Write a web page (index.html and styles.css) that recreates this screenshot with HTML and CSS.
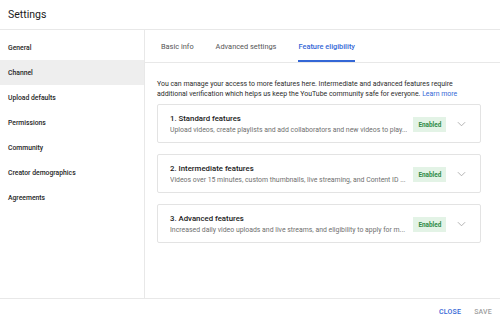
FILE: index.html
```html
<!DOCTYPE html>
<html>
<head>
<meta charset="utf-8">
<link rel="stylesheet" href="styles.css">
</head>
<body>
<div class="dialog">
  <header class="header"><h1 class="title">Settings</h1></header>
  <div class="main">
    <nav class="sidebar">
      <div class="nav-item">General</div>
      <div class="nav-item active">Channel</div>
      <div class="nav-item">Upload defaults</div>
      <div class="nav-item">Permissions</div>
      <div class="nav-item">Community</div>
      <div class="nav-item">Creator demographics</div>
      <div class="nav-item">Agreements</div>
    </nav>
    <section class="content">
      <div class="tabs">
        <div class="tab">Basic info</div>
        <div class="tab">Advanced settings</div>
        <div class="tab selected">Feature eligibility</div>
      </div>
      <div class="body">
        <p class="desc">You can manage your access to more features here. Intermediate and advanced features require additional verification which helps us keep the YouTube community safe for everyone. <span class="link">Learn more</span></p>
        <div class="cards">
          <div class="card">
            <div class="card-text">
              <div class="card-title">1. Standard features</div>
              <div class="card-sub">Upload videos, create playlists and add collaborators and new videos to play...</div>
            </div>
            <span class="badge">Enabled</span>
            <svg class="chev" viewBox="0 0 10 6" width="9" height="6"><path d="M1 1l4 4 4-4" fill="none" stroke="#a0a0a0" stroke-width="0.9"/></svg>
          </div>
          <div class="card">
            <div class="card-text">
              <div class="card-title">2. Intermediate features</div>
              <div class="card-sub">Videos over 15 minutes, custom thumbnails, live streaming, and Content ID ...</div>
            </div>
            <span class="badge">Enabled</span>
            <svg class="chev" viewBox="0 0 10 6" width="9" height="6"><path d="M1 1l4 4 4-4" fill="none" stroke="#a0a0a0" stroke-width="0.9"/></svg>
          </div>
          <div class="card">
            <div class="card-text">
              <div class="card-title">3. Advanced features</div>
              <div class="card-sub">Increased daily video uploads and live streams, and eligibility to apply for m...</div>
            </div>
            <span class="badge">Enabled</span>
            <svg class="chev" viewBox="0 0 10 6" width="9" height="6"><path d="M1 1l4 4 4-4" fill="none" stroke="#a0a0a0" stroke-width="0.9"/></svg>
          </div>
        </div>
      </div>
    </section>
  </div>
  <footer class="footer">
    <span class="btn primary">CLOSE</span>
    <span class="btn disabled">SAVE</span>
  </footer>
</div>
</body>
</html>
```

FILE: styles.css
```css
* { box-sizing: border-box; }
html, body { margin: 0; padding: 0; background: #fff; }
body { font-family: Roboto, "Liberation Sans", sans-serif; color: #0d0d0d; }
.dialog { width: 500px; height: 320px; display: flex; flex-direction: column; overflow: hidden; }
.header { height: 30px; border-bottom: 1px solid #e8e8e8; display: flex; align-items: center; padding-left: 8px; }
.title { margin: 0; font-size: 10.5px; font-weight: 400; color: #1a1a1a; }
.main { display: flex; height: 268px; }
.sidebar { width: 145px; border-right: 1px solid #e8e8e8; padding-top: 5px; flex: none; }
.nav-item { height: 25px; display: flex; align-items: center; padding-left: 8px; font-size: 6.8px; font-weight: 500; color: #262626; }
.nav-item.active { background: #eeeeee; }
.content { flex: 1; display: flex; flex-direction: column; }
.tabs { height: 33px; border-bottom: 1px solid #e8e8e8; display: flex; padding-left: 16px; gap: 22px; }
.tab { display: flex; align-items: center; padding-top: 3px; font-size: 7.4px; color: #555; border-bottom: 2px solid transparent; }
.tab.selected { color: #3367d6; font-weight: 500; border-bottom-color: #3367d6; }
.body { padding: 16px 21px 0 12px; }
.desc { margin: 0; font-size: 6.95px; line-height: 10px; color: #2b2b2b; }
.link { color: #3367d6; }
.cards { margin-top: 5px; display: flex; flex-direction: column; gap: 11px; }
.card { height: 39px; border: 1px solid #e3e3e3; border-radius: 2px; display: flex; align-items: center; padding: 0 14px 0 12px; }
.card-text { flex: 1; min-width: 0; padding-top: 2px; }
.card-title { font-size: 7.8px; font-weight: 500; line-height: 10px; color: #1a1a1a; }
.card-sub { font-size: 6.9px; line-height: 9px; margin-top: 2px; color: #707070; white-space: nowrap; overflow: hidden; }
.badge { background: #e3f3e6; color: #2e8b47; font-size: 6.4px; font-weight: 700; width: 33px; height: 15px; display: flex; align-items: center; justify-content: center; margin-left: 6px; margin-top: 2px; flex: none; }
.chev { margin-left: 11px; flex: none; }
.footer { flex: 1; border-top: 1px solid #e8e8e8; display: flex; justify-content: flex-end; align-items: center; padding: 5px 8px 0 0; gap: 13px; }
.btn { font-size: 7px; font-weight: 500; letter-spacing: 0.2px; }
.btn.primary { color: #3367d6; }
.btn.disabled { color: #a0a0a0; }
```
